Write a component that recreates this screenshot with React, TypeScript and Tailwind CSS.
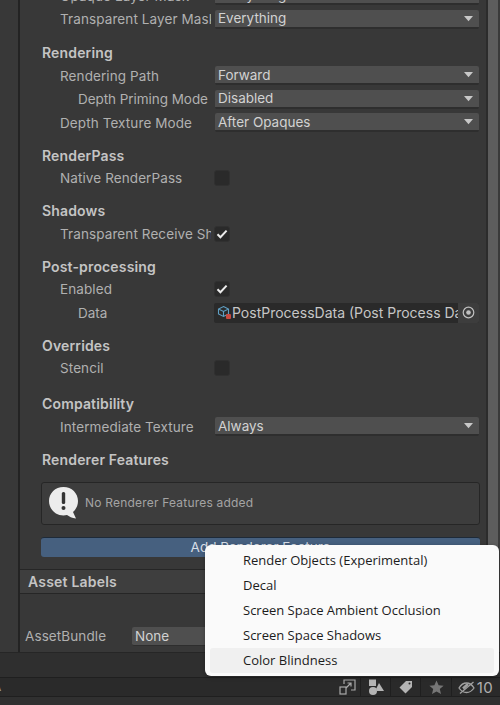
const font = "[font-family:Inter,'Noto_Sans',sans-serif]";

function Caret() {
  return (
    <svg width="11" height="7" viewBox="0 0 11 7" className="shrink-0">
      <path d="M1 1h9L5.5 6.2z" fill="#c8c8c8" />
    </svg>
  );
}

function Check() {
  return (
    <svg width="12" height="10" viewBox="0 0 12 10">
      <path d="M1.5 5.2 4.4 8.2 10.6 1.6" fill="none" stroke="#ececec" strokeWidth="2" />
    </svg>
  );
}

function Heading({ children, className = "" }: { children: string; className?: string }) {
  return (
    <div className={`flex h-[23px] items-center pl-[22px] text-[14px] font-semibold tracking-[0.15px] text-[#c4c4c4] ${className}`}>
      {children}
    </div>
  );
}

function Label({ children, deep = false, wide = false }: { children: string; deep?: boolean; wide?: boolean }) {
  return (
    <div className={`w-[191px] shrink-0 overflow-hidden whitespace-nowrap text-[13.5px] text-[#b0b0b0] ${wide ? "mr-[4px]" : "mr-[3px]"} ${deep ? "pl-[58px] tracking-[-0.05px]" : "pl-[40px] tracking-[0.1px]"}`}>
      {children}
    </div>
  );
}

function Select({ label, value, deep }: { label: string; value: string; deep?: boolean }) {
  return (
    <div className="flex h-[23.5px] items-center">
      <Label deep={deep} wide>{label}</Label>
      <div className="flex h-[19px] w-[264px] items-center justify-between rounded-[2px] border-b-2 border-[#2e2e2e] bg-[#4f4f4f] pl-[3px] pr-[5px] text-[13.5px] text-[#d2d2d2]">
        <span>{value}</span>
        <Caret />
      </div>
    </div>
  );
}

function Toggle({ label, on }: { label: string; on?: boolean }) {
  return (
    <div className="flex h-[23.5px] items-center">
      <Label>{label}</Label>
      <div className="flex h-[16px] w-[16px] items-center justify-center rounded-[3px] border border-[#303030] bg-[#2a2a2a]">
        {on && <Check />}
      </div>
    </div>
  );
}

function BottomIcons() {
  return (
    <div className="flex h-full items-center text-[#a8a8a8]">
      <div className="flex h-full w-[26px] items-center justify-center border-r border-[#1f1f1f]">
        <svg width="17" height="16" viewBox="0 0 17 16" fill="none" stroke="#a8a8a8" strokeWidth="1.2">
          <path d="M5 5V1h11v10h-4" />
          <rect x="1" y="8" width="6" height="7" />
          <path d="M7 9l5-5M8.500 4H12v3.500" />
        </svg>
      </div>
      <div className="flex h-full w-[30px] items-center justify-center border-r border-[#1f1f1f]">
        <svg width="18" height="16" viewBox="0 0 18 16" fill="#b4b4b4">
          <rect x="2" y="0.5" width="7" height="6.500" />
          <circle cx="6" cy="12" r="4" />
          <path d="M12 4l5 8h-7l-1-2z" />
        </svg>
      </div>
      <div className="flex h-full w-[30px] items-center justify-center border-r border-[#1f1f1f]">
        <svg width="15" height="14" viewBox="0 0 15 14" fill="#b4b4b4">
          <path d="M8 1h6v6l-6.500 6.500L1.500 7.500z" />
          <circle cx="11.500" cy="3.500" r="1" fill="#2a2a2a" />
        </svg>
      </div>
      <div className="flex h-full w-[31px] items-center justify-center border-r border-[#1f1f1f]">
        <svg width="15" height="15" viewBox="0 0 15 15" fill="#767676">
          <path d="M7.500.5 9.600 5.300l5 .5-3.800 3.300 1.200 5-4.500-2.700L3 14.100l1.200-5L.4 5.800l5-.5z" />
        </svg>
      </div>
      <div className="flex h-full w-[48px] items-center justify-end gap-[2px] pr-[7px]">
        <svg width="17" height="15" viewBox="0 0 17 15" fill="none" stroke="#a0a0a0" strokeWidth="1.3">
          <path d="M1 8c2-3.500 4.500-5 7.500-5S14 4.500 16 8c-2 3-4.500 4.500-7.500 4.500S3 11 1 8z" />
          <path d="M2 13.500 15.500 2" />
          <path d="M5 8.500l5-4.500" strokeWidth="2.500" />
        </svg>
        <span className="text-[15px] leading-none tracking-[0.3px] text-[#b0b0b0]">10</span>
      </div>
    </div>
  );
}

export default function App() {
  const menu = ["Render Objects (Experimental)", "Decal", "Screen Space Ambient Occlusion", "Screen Space Shadows", "Color Blindness"];

  return (
    <div className={`relative flex h-[705px] w-[500px] flex-col overflow-hidden bg-[#383838] ${font}`}>
      <div className="flex h-[652px] shrink-0">
        <div className="w-[18px] shrink-0 bg-[#383838]" />
        <div className="w-[2px] shrink-0 bg-[#232323]" />

        <div className="flex min-w-0 flex-1 flex-col">
          <div className="mt-[-2px] h-[571px] shrink-0">
            <div className="-mt-[14px]">
              <Select label="Opaque Layer Mask" value="Everything" />
            </div>
            <Select label="Transparent Layer Mask" value="Everything" />

            <Heading className="mt-[10px]">Rendering</Heading>
            <Select label="Rendering Path" value="Forward" />
            <Select label="Depth Priming Mode" value="Disabled" deep />
            <Select label="Depth Texture Mode" value="After Opaques" />

            <Heading className="mt-[9px]">RenderPass</Heading>
            <Toggle label="Native RenderPass" />

            <Heading className="mt-[9px]">Shadows</Heading>
            <Toggle label="Transparent Receive Shadows" on />

            <Heading className="mt-[9px]">Post-processing</Heading>
            <Toggle label="Enabled" on />
            <div className="flex h-[23.5px] items-center">
              <Label deep>Data</Label>
              <div className="flex h-[20px] w-[265px] items-center rounded-[2px] bg-[#2a2a2a] pl-[3px] text-[14px] text-[#c6c6c6]">
                <svg width="15" height="15" viewBox="0 0 15 15" className="shrink-0">
                  <path d="M6.500 1.500l5 2.500v5l-5 2.500-5-2.500v-5zM1.500 4l5 2.500 5-2.500M6.500 6.500v5" fill="none" stroke="#5f9fc4" strokeWidth="1.100" />
                  <rect x="9" y="9" width="5" height="5" rx="1" fill="#c8493f" />
                </svg>
                <span className="min-w-0 flex-1 overflow-hidden whitespace-nowrap">PostProcessData (Post Process Data)</span>
                <div className="flex h-[20px] w-[21px] shrink-0 items-center justify-center rounded-r-[2px] bg-[#3d3d3d]">
                  <svg width="13" height="13" viewBox="0 0 13 13">
                    <circle cx="6.500" cy="6.500" r="5.300" fill="none" stroke="#c0c0c0" strokeWidth="1.200" />
                    <circle cx="6.500" cy="6.500" r="2.300" fill="#c0c0c0" />
                  </svg>
                </div>
              </div>
            </div>

            <Heading className="mt-[9px]">Overrides</Heading>
            <Toggle label="Stencil" />

            <Heading className="mt-[12px]">Compatibility</Heading>
            <Select label="Intermediate Texture" value="Always" />

            <Heading className="mt-[9px]">Renderer Features</Heading>

            <div className="ml-[21px] mt-[11px] flex h-[43px] w-[439px] items-center gap-[6px] rounded-[3px] border border-[#262626] bg-[#3d3d3d] pl-[6px]">
              <svg width="31" height="34" viewBox="0 0 31 34" className="shrink-0">
                <path d="M15.500 1C23.800 1 30 7.200 30 15c0 4.500-2 8.300-5 11l3 6.500c-4-.5-7-2-9-3.500-1 .3-2.300.5-3.500.5C7.200 29.500 1 22.800 1 15S7.200 1 15.500 1z" fill="#ececec" />
                <rect x="13.800" y="6" width="3.400" height="12" rx="1.500" fill="#333333" />
                <circle cx="15.500" cy="22" r="2" fill="#333333" />
              </svg>
              <span className="text-[12px] tracking-[0.2px] text-[#a4a4a4]">No Renderer Features added</span>
            </div>

            <div className="ml-[21px] mt-[12px] flex h-[20px] w-[439px] items-center justify-center rounded-[3px] border-t border-[#1e2a38] bg-[#46607f] text-[13.5px] text-[#d8dee6]">
              Add Renderer Feature
            </div>
          </div>

          <div className="flex h-[25px] shrink-0 items-center border-y border-[#262626] bg-[#3e3e3e] pl-[8px] text-[14px] font-semibold tracking-[0.2px] text-[#c4c4c4]">
            Asset Labels
          </div>
          <div className="flex flex-1 items-end bg-[#383838] pb-[6px] pl-[5px]">
            <span className="w-[107px] text-[13.5px] tracking-[0.1px] text-[#b0b0b0]">AssetBundle</span>
            <div className="flex h-[19px] w-[100px] items-center rounded-[2px] border-b border-[#2e2e2e] bg-[#4f4f4f] pl-[3px] text-[13.5px] text-[#d2d2d2]">
              None
            </div>
          </div>
        </div>

        <div className="w-[2px] shrink-0 bg-[#2c2c2c]" />
        <div className="w-[10px] shrink-0 bg-[#5d5d5d]" />
        <div className="w-[2px] shrink-0 bg-[#3a3a3a]" />
      </div>

      <div className="h-[25px] shrink-0 border-t border-[#262626] bg-[#2f2f2f]" />
      <div className="flex h-[20px] shrink-0 items-center justify-between overflow-hidden border-y border-[#1f1f1f] bg-[#2a2a2a]">
        <span className="-ml-[7px] text-[12px] text-[#a0a0a0]">A</span>
        <BottomIcons />
      </div>
      <div className="flex-1 bg-[#303030]" />

      {/* Add Renderer Feature popup */}
      <div className="absolute left-[205px] top-[545px] flex h-[131px] w-[294px] flex-col rounded-[6px] bg-[#fafafa] px-[5px] pb-[3px] pt-[3px] shadow-[0_1px_4px_rgba(0,0,0,0.3)]">
        {menu.map((item, i) => (
          <div
            key={item}
            className={`flex h-[25.25px] items-center rounded-[3px] pl-[33px] text-[13px] text-[#1c1c1c] [font-family:'Open_Sans',sans-serif] ${i === 4 ? "bg-[#f0f0f0]" : ""}`}
          >
            {item}
          </div>
        ))}
      </div>
    </div>
  );
}
